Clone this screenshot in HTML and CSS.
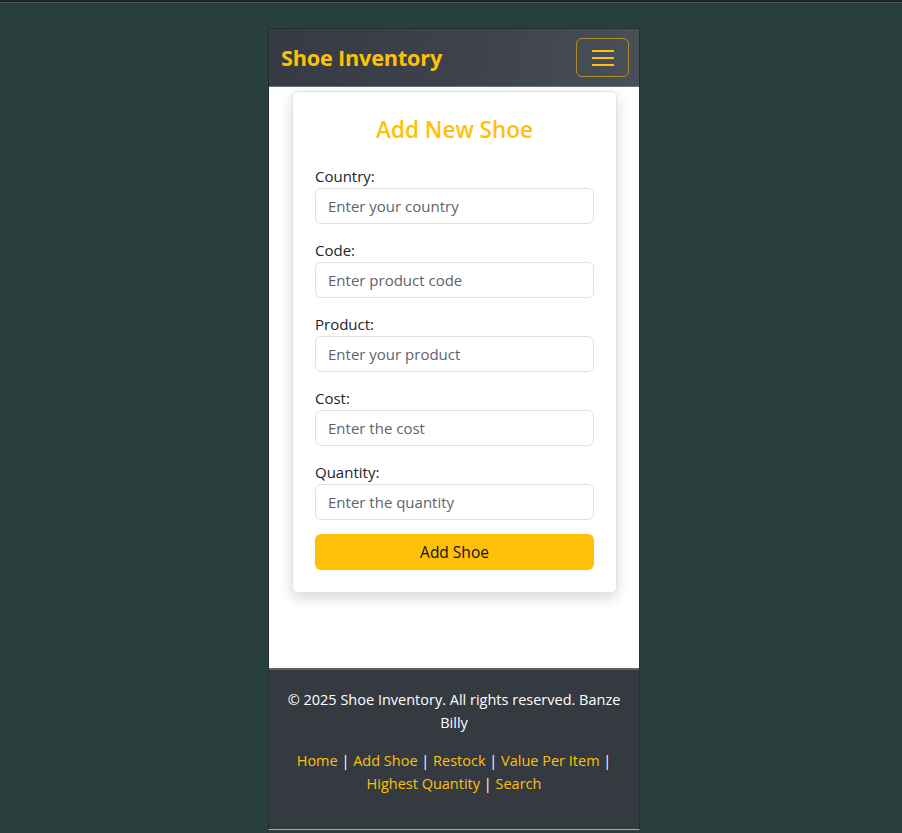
FILE: index.html
```html
<!DOCTYPE html>
<html lang="en">
<head>
<meta charset="utf-8">
<title>Shoe Inventory</title>
<link rel="stylesheet" href="styles.css">
</head>
<body>
<div class="app">
  <header class="navbar">
    <span class="brand">Shoe Inventory</span>
    <button class="toggler" type="button" aria-label="Toggle navigation">
      <svg width="24" height="18" viewBox="0 0 24 18" aria-hidden="true">
        <path d="M1 2h22M1 9h22M1 16h22" stroke="#ffc107" stroke-width="2" fill="none"/>
      </svg>
    </button>
  </header>
  <main class="main">
    <form class="card">
      <h2 class="card-title">Add New Shoe</h2>
      <div class="group">
        <label class="label" for="country">Country:</label>
        <input class="input" id="country" type="text" placeholder="Enter your country">
      </div>
      <div class="group">
        <label class="label" for="code">Code:</label>
        <input class="input" id="code" type="text" placeholder="Enter product code">
      </div>
      <div class="group">
        <label class="label" for="product">Product:</label>
        <input class="input" id="product" type="text" placeholder="Enter your product">
      </div>
      <div class="group">
        <label class="label" for="cost">Cost:</label>
        <input class="input" id="cost" type="text" placeholder="Enter the cost">
      </div>
      <div class="group last">
        <label class="label" for="qty">Quantity:</label>
        <input class="input" id="qty" type="text" placeholder="Enter the quantity">
      </div>
      <button class="submit" type="button">Add Shoe</button>
    </form>
  </main>
  <footer class="footer">
    <p class="copy">© 2025 Shoe Inventory. All rights reserved. Banze Billy</p>
    <p class="links"><a href="#">Home</a> | <a href="#">Add Shoe</a> | <a href="#">Restock</a> | <a href="#">Value Per Item</a> | <a href="#">Highest Quantity</a> | <a href="#">Search</a></p>
  </footer>
</div>
</body>
</html>
```

FILE: styles.css
```css
* { box-sizing: border-box; }
html { background: #283f3b; }
body {
  margin: 0;
  min-height: 833px;
  background: #283f3b;
  border-top: 2px solid #202323;
  box-shadow: inset 0 1px 0 #485a55;
  font-family: "Open Sans", "Noto Sans", sans-serif;
  font-size: 15px;
  color: #212529;
  padding-top: 26px;
}
.app {
  width: 372px;
  margin-left: 268px;
  border: 1px solid #22302d;
  border-bottom: 1px solid #a3a9ab;
  background: #fff;
  display: flex;
  flex-direction: column;
}
.navbar {
  height: 58px;
  background: linear-gradient(100deg, #353a43 0%, #3f444c 60%, #4a5058 100%);
  border-bottom: 1px solid #6e7378;
  display: flex;
  align-items: center;
  justify-content: space-between;
  padding: 0 10px 0 12px;
}
.brand {
  color: #ffc107;
  font-weight: 700;
  font-size: 21.7px;
  letter-spacing: -0.2px;
}
.toggler {
  width: 53px;
  height: 39px;
  border: 1px solid rgba(255, 193, 7, 0.55);
  border-radius: 6px;
  background: transparent;
  display: flex;
  align-items: center;
  justify-content: center;
  padding: 0;
}
.main {
  padding: 4px 22px 75px 23px;
}
.card {
  background: #fff;
  border: 1px solid #e3e3e3;
  border-radius: 6px;
  box-shadow: 0 5px 14px rgba(0, 0, 0, 0.16);
  padding: 23px 22px 22px 22px;
}
.card-title {
  margin: 0 0 22px;
  text-align: center;
  color: #ffc107;
  font-size: 22.5px;
  font-weight: 600;
  line-height: 29px;
}
.group { margin-bottom: 16px; }
.group.last { margin-bottom: 14px; }
.label {
  display: block;
  line-height: 21px;
  font-size: 15px;
}
.input {
  display: block;
  width: 100%;
  height: 36px;
  margin-top: 1px;
  border: 1px solid #dfe2e6;
  border-radius: 6px;
  padding: 0 12px;
  font-family: inherit;
  font-size: 15px;
  color: #212529;
}
.input::placeholder { color: #5f646a; }
.submit {
  display: block;
  width: 100%;
  height: 36px;
  border: none;
  border-radius: 6px;
  background: #ffc107;
  color: #111;
  font-family: inherit;
  font-size: 15.5px;
}
.footer {
  background: #343a40;
  border-top: 2px solid #5c6166;
  color: #fff;
  text-align: center;
  padding: 18px 10px 34px;
  font-size: 14.5px;
  line-height: 23px;
}
.footer p { margin: 0; }
.copy { margin-bottom: 15px !important; }
.links a { color: #ffc107; text-decoration: none; }
```
